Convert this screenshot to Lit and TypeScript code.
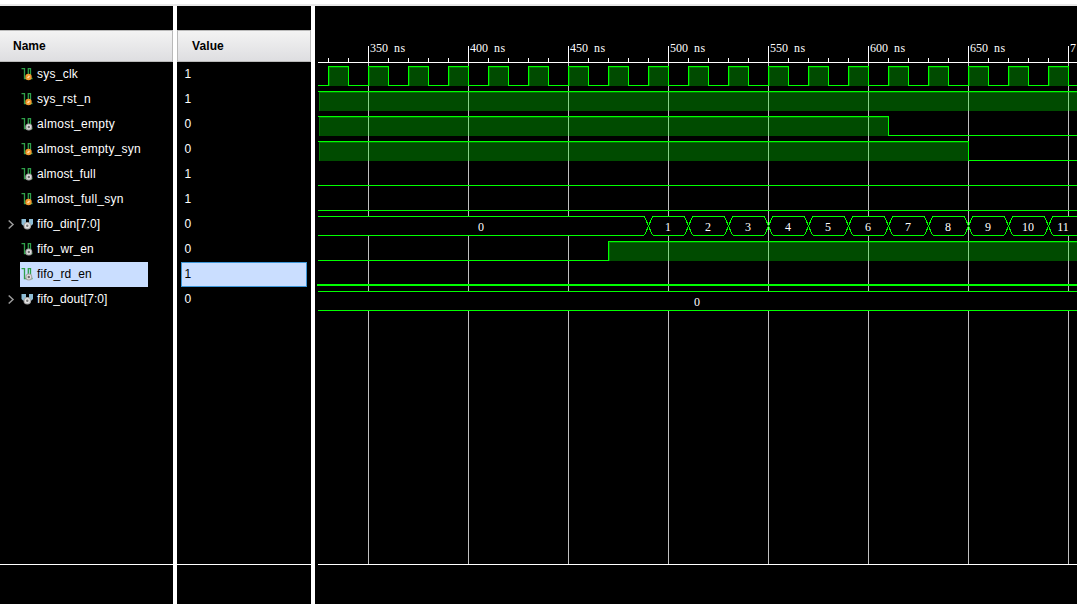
import { LitElement, html, svg, css } from "lit";
import { customElement } from "lit/decorators.js";

type Kind = "reg" | "wire" | "bus";
interface Signal {
  name: string;
  value: string;
  kind: Kind;
  spacing: number;
  selected?: boolean;
}

const SIGNALS: Signal[] = [
  { name: "sys_clk", value: "1", kind: "reg", spacing: 0.25 },
  { name: "sys_rst_n", value: "1", kind: "reg", spacing: 0.28 },
  { name: "almost_empty", value: "0", kind: "wire", spacing: 0.28 },
  { name: "almost_empty_syn", value: "0", kind: "reg", spacing: 0.25 },
  { name: "almost_full", value: "1", kind: "wire", spacing: 0.12 },
  { name: "almost_full_syn", value: "1", kind: "reg", spacing: 0.27 },
  { name: "fifo_din[7:0]", value: "0", kind: "bus", spacing: 0.08 },
  { name: "fifo_wr_en", value: "0", kind: "wire", spacing: 0.15 },
  { name: "fifo_rd_en", value: "1", kind: "wire", spacing: 0.15, selected: true },
  { name: "fifo_dout[7:0]", value: "0", kind: "bus", spacing: 0.08 },
];

/* Canvas geometry: 2px per nanosecond, 25px per signal row. */
const xAt = (ns: number) => 53 + (ns - 350) * 2;
const highY = (row: number) => 60 + row * 25;
const LEFT = 3;
const RIGHT = 762;
const FLOOR = 558;
const range = (from: number, to: number, step: number) => {
  const out: number[] = [];
  for (let v = from; v <= to; v += step) out.push(v);
  return out;
};

const signalIcon = (kind: Kind) => {
  if (kind === "bus")
    return html`<svg class="icon" width="13" height="13" viewBox="0 0 13 13">
      <path d="M0.500 1h4.500v6.500H2L0.500 6zM8 1h4v5L10.500 7.500H8z" fill="#8dbdd6" />
      <circle cx="6.300" cy="7.700" r="3.800" fill="#a9a9a9" />
      <circle cx="6.300" cy="7.700" r="2.600" fill="#e4e4e4" />
      <circle cx="6.300" cy="7.700" r="1.200" fill="#777" />
    </svg>`;
  return html`<svg class="icon" width="13" height="13" viewBox="0 0 13 13">
    <path d="M0.500 0.700H3.500V10.500H6M7.300 8V0.700H9.500V10.500H11.500" fill="none" stroke="#2fa04a" stroke-width="1.300" />
    ${kind === "reg"
      ? svg`<circle cx="7.500" cy="9" r="3.200" fill="#f29a2e"/><path d="M6.500 10L8.500 8" stroke="#ffe0b0" stroke-width="1.400"/>`
      : svg`<circle cx="7.800" cy="9" r="3.500" fill="#a6a6a6"/><circle cx="7.800" cy="9" r="2.400" fill="#e2e2e2"/><circle cx="7.800" cy="9" r="1.200" fill="#6c6c6c"/>`}
  </svg>`;
};

@customElement("name-pane")
export class NamePane extends LitElement {
  static styles = css`
    :host { display: flex; flex-direction: column; height: 598px; }
    .spacer { height: 24px; }
    .header {
      box-sizing: border-box; height: 32px; padding-left: 13px;
      border: 1px solid #b9b9b9; border-left: 0;
      background: linear-gradient(#f3f3f3, #dedee1);
      color: #000; font-weight: bold; line-height: 31px;
    }
    .rows { flex: 1; }
    .row { display: flex; height: 25px; align-items: center; }
    .twist { width: 20px; height: 25px; display: block; }
    .cell { display: flex; align-items: center; width: 128px; height: 25px; }
    .cell.selected { background: #cadeff; color: #000; }
    .icon { margin: 0 2px 0 1px; flex: none; }
    .label { padding-bottom: 1px; margin-left: 1px; white-space: nowrap; }
    .footer { height: 39px; border-top: 1px solid #fff; }
  `;
  render() {
    return html`
      <div class="spacer"></div>
      <div class="header">Name</div>
      <div class="rows">
        ${SIGNALS.map(
          (s) => html`<div class="row">
            <svg class="twist" viewBox="0 0 20 25">
              ${s.kind === "bus"
                ? svg`<path d="M8.700 8.500L13 12.500L8.700 16.500" fill="none" stroke="#9a9a9a" stroke-width="1.500"/>`
                : ""}
            </svg>
            <div class="cell ${s.selected ? "selected" : ""}">
              ${signalIcon(s.kind)}
              <span class="label" style="letter-spacing:${s.spacing}px">${s.name}</span>
            </div>
          </div>`
        )}
      </div>
      <div class="footer"></div>
    `;
  }
}

@customElement("value-pane")
export class ValuePane extends LitElement {
  static styles = css`
    :host { display: flex; flex-direction: column; height: 598px; }
    .spacer { height: 24px; }
    .header {
      box-sizing: border-box; height: 32px; padding-left: 14px;
      border: 1px solid #b9b9b9;
      background: linear-gradient(#f3f3f3, #dedee1);
      color: #000; font-weight: bold; line-height: 31px; letter-spacing: 0.1px;
    }
    .rows { flex: 1; padding: 0 4px; }
    .value {
      box-sizing: border-box; height: 25px; padding-left: 2.4px;
      border: 1px solid transparent; line-height: 22px;
    }
    .value.selected { background: #cadeff; border-color: #3d96d8; color: #000; }
    .footer { height: 39px; border-top: 1px solid #fff; }
  `;
  render() {
    return html`
      <div class="spacer"></div>
      <div class="header">Value</div>
      <div class="rows">
        ${SIGNALS.map((s) => html`<div class="value ${s.selected ? "selected" : ""}">${s.value}</div>`)}
      </div>
      <div class="footer"></div>
    `;
  }
}

@customElement("wave-pane")
export class WavePane extends LitElement {
  static styles = css`
    :host { display: block; height: 598px; overflow: hidden; }
    .canvas { display: block; shape-rendering: crispEdges; }
    .white { fill: #fff; }
    .grid { fill: #c0c0c0; }
    .on { fill: #0f0; }
    .area { fill: #0f0; fill-opacity: 0.294; }
    .shade { fill: #0f0; fill-opacity: 0.25; }
    .hex { fill: #000; }
    .edge { fill: none; stroke: #0f0; stroke-width: 1; }
    .time { fill: #fff; font: 12px "Liberation Serif", serif; word-spacing: 3px; }
    .ns { letter-spacing: 0.5px; }
    .data { fill: #fff; font: 12px "Liberation Serif", serif; text-anchor: middle; }
  `;

  /* A high stretch: bright top edge, translucent body, optional vertical edges. */
  private high(row: number, a: number, b: number, rise: boolean, fall: boolean) {
    const y = highY(row);
    const body = rise ? a : a + 1;
    return svg`
      <rect class="area" x=${body} y=${y + 1} width=${b - body} height="19"/>
      <rect class="shade" x=${body} y=${y + 1} width=${b - body} height="1"/>
      <rect class="shade" x=${rise ? a + 1 : body} y=${y + 2} width="1" height="18"/>
      <rect class="on" x=${a} y=${y} width=${b - a + (fall ? 1 : 0)} height="1"/>
      ${rise ? svg`<rect class="on" x=${a} y=${y} width="1" height="20"/>` : ""}
      ${fall ? svg`<rect class="on" x=${b} y=${y} width="1" height="20"/>` : ""}`;
  }

  private low(row: number, a: number, b: number) {
    return svg`<rect class="on" x=${a} y=${highY(row) + 19} width=${b - a} height="1"/>`;
  }

  private busSteps(row: number) {
    const y = highY(row);
    const cuts = range(490, 690, 20).map(xAt);
    const stops = [LEFT - 5, ...cuts, RIGHT + 10];
    return stops.slice(0, -1).map((a, i) => {
      const b = stops[i + 1];
      return svg`<polygon class="hex" points="${a},${y + 10} ${a + 5},${y} ${b - 4},${y} ${b},${y + 10} ${b - 4},${y + 20} ${a + 5},${y + 20}"/>
        <rect class="on" x=${a + 5} y=${y} width=${b - a - 9} height="1"/>
        <rect class="on" x=${a + 5} y=${y + 19} width=${b - a - 9} height="1"/>
        ${i > 0
          ? svg`<path class="edge" d="M${a - 3.5} ${y + 0.5}L${a + 4.5} ${y + 19.5}M${a + 4.5} ${y + 0.5}L${a - 3.5} ${y + 19.5}"/>
            <text class="data" x=${i === 11 ? a + 15 : a + 20} y=${y + 15}>${i}</text>`
          : ""}`;
    });
  }

  render() {
    const majors = range(350, 700, 50);
    return html`<svg class="canvas" width="762" height="598" viewBox="0 0 762 598">
      ${majors.map((t) => svg`<rect class="grid" x=${xAt(t)} y="56" width="1" height=${FLOOR - 56}/>
        <rect class="white" x=${xAt(t)} y="40" width="1" height="17"/>
        ${t < 700
          ? svg`<text class="time" x=${xAt(t) + 2} y="46">${t} <tspan class="ns">ns</tspan></text>`
          : svg`<text class="time" x=${xAt(t) + 2} y="46">7</text>`}`)}
      ${range(330, 700, 10).map((t) => svg`<rect class="white" x=${xAt(t)} y="52" width="1" height="5"/>`)}
      <rect class="white" x=${LEFT} y="56" width=${RIGHT - LEFT} height="1"/>

      ${this.low(0, LEFT, xAt(330))}
      ${range(330, 690, 20).map((t) => svg`${this.high(0, xAt(t), xAt(t + 10), true, true)}${this.low(0, xAt(t + 10), xAt(t + 20))}`)}
      ${this.high(1, LEFT, RIGHT, false, false)}
      ${this.high(2, LEFT, xAt(610), false, true)}${this.low(2, xAt(610), RIGHT)}
      ${this.high(3, LEFT, xAt(650), false, true)}${this.low(3, xAt(650), RIGHT)}
      ${this.low(4, LEFT, RIGHT)}
      ${this.low(5, LEFT, RIGHT)}
      <g>${this.busSteps(6)}<rect class="hex" x="0" y="210" width="3" height="20"/></g>
      <text class="data" x="166" y="225">0</text>
      ${this.low(7, LEFT, xAt(470))}${this.high(7, xAt(470), RIGHT, true, false)}
      <rect class="on" x="2" y="278" width="760" height="2"/>
      <rect class="hex" x=${LEFT} y="285" width="759" height="20"/>
      <rect class="on" x=${LEFT} y="285" width="759" height="1"/>
      <rect class="on" x=${LEFT} y="304" width="759" height="1"/>
      <text class="data" x="382" y="300">0</text>

      <rect class="white" x=${LEFT} y=${FLOOR} width=${RIGHT - LEFT} height="1"/>
    </svg>`;
  }
}

@customElement("app-root")
export class AppRoot extends LitElement {
  static styles = css`
    :host {
      display: block; width: 1077px; height: 604px; overflow: hidden;
      background: #fff; color: #fff;
      font: 12px "Liberation Sans", Arial, sans-serif;
    }
    .strip { height: 4px; border-bottom: 2px solid #e8e8e8; }
    .panes { display: grid; grid-template-columns: 173px 134px 762px; column-gap: 4px; height: 598px; }
    .pane { background: #000; }
  `;
  render() {
    return html`
      <div class="strip"></div>
      <div class="panes">
        <name-pane class="pane"></name-pane>
        <value-pane class="pane"></value-pane>
        <wave-pane class="pane"></wave-pane>
      </div>
    `;
  }
}
